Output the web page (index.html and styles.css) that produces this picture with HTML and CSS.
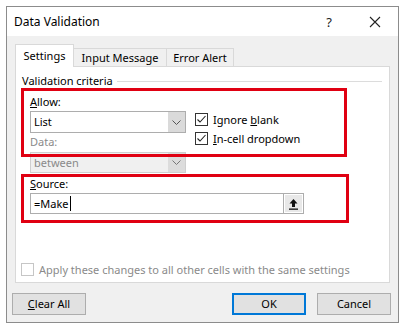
FILE: index.html
```html
<!DOCTYPE html>
<html>
<head>
<meta charset="utf-8">
<link rel="stylesheet" href="styles.css">
</head>
<body>
<div class="dialog">
  <div class="titlebar">
    <span class="title">Data Validation</span>
    <span class="help">?</span>
    <span class="close"><svg width="12" height="12" viewBox="0 0 12 12"><path d="M1 1 L11 11 M11 1 L1 11" stroke="#222" stroke-width="1.1" fill="none"/></svg></span>
  </div>
  <div class="body">
    <div class="tabs">
      <div class="tab active">Settings</div>
      <div class="tab t2">Input Message</div>
      <div class="tab t3">Error Alert</div>
    </div>
    <div class="panel">
      <div class="group-title"><span>Validation criteria</span><span class="rule"></span></div>
      <div class="criteria">
        <div class="row1">
          <div class="leftcol">
            <div class="label"><u>A</u>llow:</div>
            <div class="combo">
              <span class="combo-text">List</span>
              <span class="combo-btn"><svg width="9" height="5" viewBox="0 0 9 5"><path d="M0.5 0.5 L4.5 4.5 L8.5 0.5" stroke="#555" fill="none"/></svg></span>
            </div>
            <div class="label disabled">Data:</div>
            <div class="combo disabled">
              <span class="combo-text">between</span>
              <span class="combo-btn"><svg width="9" height="5" viewBox="0 0 9 5"><path d="M0.5 0.5 L4.5 4.5 L8.5 0.5" stroke="#777" fill="none"/></svg></span>
            </div>
          </div>
          <div class="rightcol">
            <div class="check"><span class="box"><svg width="11" height="11" viewBox="0 0 11 11"><path d="M1.5 5.5 L4 8 L9.5 2" stroke="#222" stroke-width="1.1" fill="none"/></svg></span><span>Ignore <u>b</u>lank</span></div>
            <div class="check"><span class="box"><svg width="11" height="11" viewBox="0 0 11 11"><path d="M1.5 5.5 L4 8 L9.5 2" stroke="#222" stroke-width="1.1" fill="none"/></svg></span><span><u>I</u>n-cell dropdown</span></div>
          </div>
        </div>
        <div class="label source-label"><u>S</u>ource:</div>
        <div class="input">
          <span class="input-text">=Make<span class="caret"></span></span>
          <span class="ref-btn"><svg width="11" height="12" viewBox="0 0 11 12"><path d="M5.5 1 L1.5 5.5 H4 V9 H7 V5.5 H9.5 Z" fill="#111"/><rect x="1" y="10.5" width="9" height="1.3" fill="#111"/></svg></span>
        </div>
      </div>
      <div class="apply"><span class="box dim"></span><span>Apply these changes to all other cells with the same settings</span></div>
      <div class="mark mark1"></div>
      <div class="mark mark2"></div>
    </div>
    <div class="buttons">
      <div class="btn"><u>C</u>lear All</div>
      <div class="spacer"></div>
      <div class="btn default">OK</div>
      <div class="btn">Cancel</div>
    </div>
  </div>
</div>
</body>
</html>
```
FILE: styles.css
```css
* { box-sizing: border-box; }
html, body { margin: 0; padding: 0; background: #fff; }
body {
  font-family: "Noto Sans", "Open Sans", sans-serif;
  font-size: 11px;
  color: #000;
  width: 402px;
  height: 329px;
  overflow: hidden;
}
.dialog {
  margin: 6px 0 0 6px;
  width: 393px;
  height: 317px;
  border: 1px solid #8c8c8c;
  background: #f0f0f0;
  display: flex;
  flex-direction: column;
}
.titlebar {
  height: 29px;
  background: #fff;
  display: flex;
  align-items: center;
  padding-left: 7px;
  font-size: 12px;
}
.title { flex: 1; }
.help { width: 46px; text-align: center; font-size: 13px; color: #222; }
.close { width: 46px; display: flex; justify-content: center; }
.body { flex: 1; display: flex; flex-direction: column; padding: 0 8px 0 8px; }
.tabs { display: flex; align-items: flex-end; margin-top: 8px; height: 22px; }
.tab {
  height: 18px;
  border: 1px solid #d9d9d9;
  border-bottom: none;
  background: #f0f0f0;
  line-height: 17px;
  margin-left: -1px;
  white-space: nowrap;
  text-align: center;
}
.tab.active {
  margin-left: 0;
  width: 59px;
  height: 23px;
  background: #fff;
  padding-top: 2px;
  position: relative;
  margin-bottom: -1px;
  z-index: 1;
  line-height: 18px;
}
.tab.t2 { width: 94px; }
.tab.t3 { width: 68px; }
.panel {
  position: relative;
  height: 217px;
  border: 1px solid #d9d9d9;
  background: #fff;
  padding: 6px 7px 0 6px;
}
.group-title { display: flex; align-items: center; height: 15px; }
.group-title .rule { flex: 1; height: 1px; background: #dcdcdc; margin-left: 4px; margin-top: 2px; }
.criteria { padding-left: 8px; margin-top: 6px; }
.row1 { display: flex; }
.leftcol { width: 156px; }
.label { height: 16px; line-height: 16px; }
.label.disabled { color: #8a8a8a; margin-top: 1px; }
.combo {
  margin-top: 1px;
  height: 22px;
  border: 1px solid #adadad;
  background: #fff;
  display: flex;
}
.combo.disabled { height: 21px; background: #f0f0f0; border-color: #cfcfcf; color: #8a8a8a; margin-top: 2px; }
.combo-text { flex: 1; padding-left: 3px; line-height: 20px; }
.combo.disabled .combo-text { line-height: 19px; }
.combo-btn {
  width: 17px;
  background: #dadada;
  display: flex;
  align-items: center;
  justify-content: center;
}
.combo.disabled .combo-btn { background: #dcdcdc; }
.rightcol { margin-left: 9px; padding-top: 16px; }
.check { display: flex; align-items: center; height: 19px; gap: 5px; }
.box {
  width: 13px; height: 13px;
  border: 1px solid #333;
  background: #fff;
  display: flex; align-items: center; justify-content: center;
}
.box.dim { border-color: #c6c6c6; }
.source-label { margin-top: 3px; }
.input {
  margin-top: 1px;
  width: 274px;
  height: 21px;
  border: 1px solid #adadad;
  display: flex;
  background: #fff;
}
.input-text { flex: 1; padding-left: 3px; line-height: 19px; display: flex; align-items: center; }
.caret { display: inline-block; width: 1px; height: 15px; background: #000; margin-left: 1px; }
.ref-btn {
  width: 21px;
  margin: -1px -1px -1px 0;
  border: 1px solid #adadad;
  background: #e8e8e8;
  display: flex; align-items: center; justify-content: center;
  box-shadow: inset 0 0 0 1px #fff;
}
.apply {
  display: flex; align-items: center; gap: 5px;
  margin-top: 49px;
  margin-left: -1px;
  color: #8a8a8a;
  height: 13px;
}
.mark { position: absolute; border: 3px solid #e00012; }
.mark1 { left: 5px; top: 21px; width: 326px; height: 69px; }
.mark2 { left: 5px; top: 107px; width: 328px; height: 49px; }
.buttons { display: flex; margin: 10px -1px 0 -3px; gap: 11px; }
.spacer { flex: 1; }
.btn {
  width: 74px; height: 22px;
  border: 1px solid #adadad;
  background: #e1e1e1;
  text-align: center;
  line-height: 20px;
}
.btn.default { border: 2px solid #0078d7; line-height: 18px; }
```
